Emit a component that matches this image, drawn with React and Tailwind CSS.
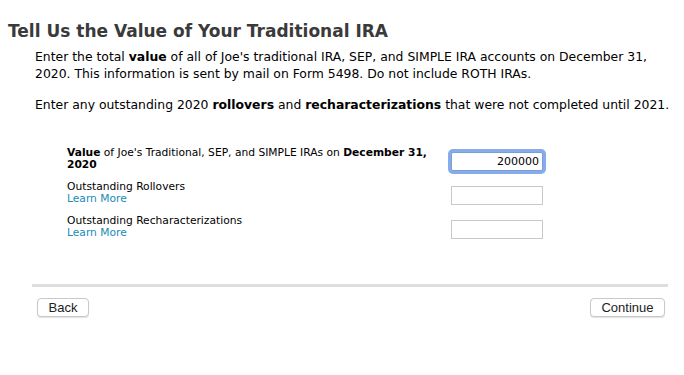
import React from 'react';

const lucida = { fontFamily: '"DejaVu Sans", Verdana, sans-serif' };

function Field({ label, learnMore, value, focused }) {
  return (
    <div className="flex items-start h-[24px]">
      <div className="w-[370px] text-[10.7px] leading-[12px] text-black">
        {label}
        {learnMore && <div className="text-[#1a8bb8]">Learn More</div>}
      </div>
      <div className="ml-[14px] mt-[5px]">
        <input
          readOnly
          value={value || ''}
          className={
            focused
              ? 'block w-[92px] h-[19px] border border-[#7a9ed6] rounded-[2px] ring-[3px] ring-[#86acec] text-right text-[11px] pr-[3px] outline-none bg-white text-black'
              : 'block w-[92px] h-[19px] border border-[#c8c8c8] text-right text-[11px] outline-none bg-white'
          }
        />
      </div>
    </div>
  );
}

export default function App() {
  return (
    <div className="w-[684px] h-[375px] bg-white overflow-hidden" style={lucida}>
      <h1 className="pl-[8px] pt-[19px] text-[17px] leading-[24px] font-bold text-[#3a3a3a]">
        Tell Us the Value of Your Traditional IRA
      </h1>
      <div className="pl-[35px] pr-[8px] mt-[5px] text-[12.4px] leading-[17px] text-black">
        <p>
          Enter the total <b>value</b> of all of Joe's traditional IRA, SEP, and SIMPLE IRA accounts on December 31, 2020. This information is sent by mail on Form 5498. Do not include ROTH IRAs.
        </p>
        <p className="mt-[14px]">
          Enter any outstanding 2020 <b>rollovers</b> and <b>recharacterizations</b> that were not completed until 2021.
        </p>
      </div>
      <div className="pl-[67px] mt-[34px] flex flex-col gap-[10px]">
        <Field
          label={<><b>Value</b> of Joe's Traditional, SEP, and SIMPLE IRAs on <b>December 31, 2020</b></>}
          value="200000"
          focused
        />
        <Field label="Outstanding Rollovers" learnMore />
        <Field label="Outstanding Recharacterizations" learnMore />
      </div>
      <div className="ml-[32px] mr-[16px] mt-[45px] h-[3px] bg-[#dedede]" />
      <div className="ml-[37px] mr-[19px] mt-[11px] flex justify-between" style={{ fontFamily: '"Liberation Sans", Arial, sans-serif' }}>
        <button className="w-[52px] h-[19px] border border-[#c9c9c9] rounded-[4px] bg-white text-[13px] leading-[17px] text-[#222] shadow-[0_1px_1px_rgba(0,0,0,0.12)]">
          Back
        </button>
        <button className="w-[75px] h-[19px] border border-[#c9c9c9] rounded-[4px] bg-white text-[13px] leading-[17px] text-[#222] shadow-[0_1px_1px_rgba(0,0,0,0.12)]">
          Continue
        </button>
      </div>
    </div>
  );
}
